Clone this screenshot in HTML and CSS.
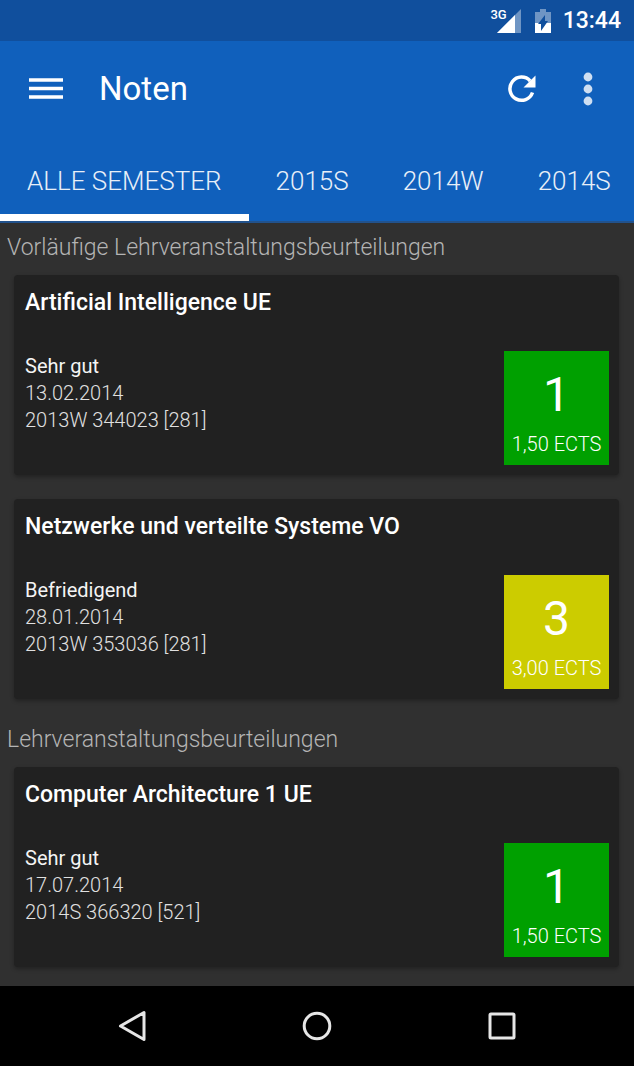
FILE: index.html
```html
<!DOCTYPE html>
<html lang="de">
<head>
<meta charset="utf-8">
<meta name="viewport" content="width=device-width, initial-scale=1">
<title>Noten</title>
<link rel="stylesheet" href="styles.css">
</head>
<body>
<div class="screen">
  <div class="status-bar">
    <span class="network">3G</span>
    <svg class="signal" width="24" height="24" viewBox="0 0 24 24" aria-hidden="true"><path d="M24 0V24H0z" fill="#fff" opacity=".4"/><path d="M18 6V24H0z" fill="#fff"/></svg>
    <svg class="battery" width="16" height="24" viewBox="0 0 16 24" aria-hidden="true"><path d="M5 0h6v3h5v11H0V3h5z" fill="#fff" opacity=".4"/><path d="M0 14h16v10H0z" fill="#fff"/><path d="M10 6v6h3L6 22v-7H3z" fill="#104f9d"/></svg>
    <span class="clock">13:44</span>
  </div>

  <header class="header">
    <div class="app-bar">
      <button class="icon-button" aria-label="Menü"><svg width="34" height="22" viewBox="0 0 34 22"><path d="M0 2h34M0 10.500h34M0 19h34" stroke="#fff" stroke-width="3.600"/></svg></button>
      <h1 class="app-title">Noten</h1>
      <button class="icon-button" aria-label="Aktualisieren"><svg width="28" height="28" viewBox="0 0 28 28"><path d="M24.500 17.500A11.600 11.600 0 1 1 22.200 6" fill="none" stroke="#fff" stroke-width="3.500"/><path d="M27.500.5v12H15.500z" fill="#fff"/></svg></button>
      <button class="icon-button more" aria-label="Weitere Optionen"><svg width="10" height="34" viewBox="0 0 10 34" fill="#cfdff2"><circle cx="5" cy="5" r="4.400"/><circle cx="5" cy="17" r="4.400"/><circle cx="5" cy="29" r="4.400"/></svg></button>
    </div>
    <nav class="tabs" aria-label="Semester">
      <button class="tab active" aria-current="true">ALLE SEMESTER</button>
      <button class="tab">2015S</button>
      <button class="tab">2014W</button>
      <button class="tab">2014S</button>
    </nav>
  </header>

  <main class="content">
    <section class="group">
      <h2 class="group-title">Vorläufige Lehrveranstaltungsbeurteilungen</h2>
      <article class="card">
        <h3 class="course">Artificial Intelligence UE</h3>
        <div class="row">
          <div class="details"><p class="result">Sehr gut</p><p>13.02.2014</p><p>2013W 344023 [281]</p></div>
          <div class="grade good"><span class="mark">1</span><span class="ects">1,50 ECTS</span></div>
        </div>
      </article>
      <article class="card">
        <h3 class="course">Netzwerke und verteilte Systeme VO</h3>
        <div class="row">
          <div class="details"><p class="result">Befriedigend</p><p>28.01.2014</p><p>2013W 353036 [281]</p></div>
          <div class="grade medium"><span class="mark">3</span><span class="ects">3,00 ECTS</span></div>
        </div>
      </article>
    </section>
    <section class="group">
      <h2 class="group-title">Lehrveranstaltungsbeurteilungen</h2>
      <article class="card">
        <h3 class="course">Computer Architecture 1 UE</h3>
        <div class="row">
          <div class="details"><p class="result">Sehr gut</p><p>17.07.2014</p><p>2014S 366320 [521]</p></div>
          <div class="grade good"><span class="mark">1</span><span class="ects">1,50 ECTS</span></div>
        </div>
      </article>
    </section>
  </main>

  <nav class="nav-bar" aria-label="System">
    <button class="nav-button" aria-label="Zurück"><svg width="30" height="32" viewBox="0 0 30 32"><path d="M26 2.500V29.500L2.500 16z"/></svg></button>
    <button class="nav-button" aria-label="Startseite"><svg width="30" height="32" viewBox="0 0 30 32"><circle cx="15" cy="16" r="12.800"/></svg></button>
    <button class="nav-button" aria-label="Übersicht"><svg width="30" height="32" viewBox="0 0 30 32"><rect x="4" y="4" width="24" height="24" rx="1"/></svg></button>
  </nav>
</div>
</body>
</html>
```
FILE: styles.css
```css
* {
  box-sizing: border-box;
}

body,
h1,
h2,
h3,
p {
  margin: 0;
}

body {
  background: #303030;
  color: #fff;
  font-family: Roboto, "Liberation Sans", sans-serif;
}

button {
  padding: 0;
  border: 0;
  background: none;
  color: inherit;
  font: inherit;
  cursor: pointer;
}

svg {
  display: block;
}

.screen {
  display: flex;
  flex-direction: column;
  min-height: 100vh;
  overflow: hidden;
}

.status-bar {
  display: flex;
  align-items: center;
  justify-content: flex-end;
  height: 41px;
  padding: 0 13px;
  background: #104f9d;
}

.network {
  align-self: flex-start;
  margin: 8px -10px 0 0;
  font-size: 13px;
  line-height: 14px;
  font-weight: 500;
}

.battery {
  margin: 0 12px 0 14px;
}

.clock {
  font-size: 23px;
  line-height: 28px;
  font-weight: 500;
}

.header {
  background: #1060bc;
  border-bottom: 2px solid #22528c;
}

.app-bar {
  display: flex;
  align-items: center;
  height: 96px;
  padding: 0 23px 0 29px;
}

.icon-button {
  display: grid;
  place-items: center;
  min-width: 34px;
  height: 48px;
}

.app-title {
  flex: 1;
  margin-left: 36px;
  font-size: 33px;
  line-height: 40px;
  font-weight: 400;
}

.more {
  min-width: 46px;
  margin-left: 26px;
}

.tabs {
  display: flex;
  overflow: hidden;
}

.tab {
  flex: none;
  height: 84px;
  padding: 10px 27px 0;
  border-bottom: 7px solid transparent;
  color: #e8eff8;
  font-size: 26px;
  line-height: 30px;
  font-weight: 300;
}

.active {
  border-color: #fff;
}

.content {
  flex: 1;
}

.group-title {
  padding: 11px 7px 13px;
  color: #b4b4b4;
  font-size: 23px;
  line-height: 28px;
  font-weight: 300;
}

.card {
  margin: 0 15px 24px 14px;
  padding: 13px 10px 10px 11px;
  border-radius: 4px;
  background: #212121;
  box-shadow: 0 2px 4px rgba(0, 0, 0, 0.3);
}

.group .card:last-child {
  margin-bottom: 16px;
}

.course {
  font-size: 23px;
  line-height: 30px;
  font-weight: 500;
}

.row {
  display: flex;
  justify-content: space-between;
  margin-top: 33px;
}

.details {
  padding-top: 2px;
  color: #e0e0e0;
  font-size: 20px;
  line-height: 27px;
  font-weight: 300;
}

.result {
  color: #f4f4f4;
  font-weight: 400;
}

.grade {
  display: flex;
  flex-direction: column;
  align-items: center;
  min-width: 105px;
  height: 114px;
  padding-top: 16px;
}

.good {
  background: #00a000;
}

.medium {
  background: #cccc00;
}

.mark {
  font-size: 48px;
  line-height: 56px;
}

.ects {
  margin-top: 8px;
  font-size: 20px;
  line-height: 26px;
  font-weight: 300;
}

.nav-bar {
  display: flex;
  align-items: center;
  justify-content: center;
  height: 80px;
  gap: 10%;
  background: #000;
}

.nav-button {
  display: grid;
  place-items: center;
  width: 19%;
  height: 80px;
}

.nav-button svg {
  fill: none;
  stroke: #e6e6e6;
  stroke-width: 3px;
  stroke-linejoin: round;
}
```
